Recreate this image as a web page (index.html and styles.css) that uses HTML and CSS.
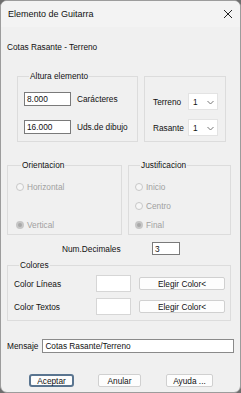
FILE: index.html
```html
<!DOCTYPE html>
<html lang="es">

<head>
  <meta charset="UTF-8" />
  <meta name="viewport" content="width=device-width, initial-scale=1.0" />
  <title>Elemento de Guitarra</title>
  <link rel="stylesheet" href="styles.css">
</head>

<body>
  <div class="window">
    <div class="titlebar">
      <span>Elemento de Guitarra</span>
      <svg class="close" width="10" height="10" viewBox="0 0 10 10">
        <path d="M1 1 L9 9 M9 1 L1 9" stroke="#222" stroke-width="1" fill="none" />
      </svg>
    </div>

    <div class="caption">Cotas Rasante - Terreno</div>

    <div class="row-top">
      <fieldset class="group altura">
        <legend>Altura elemento</legend>
        <div class="field-row">
          <div class="input w-num">8.000</div>
          <span>Carácteres</span>
        </div>
        <div class="field-row second">
          <div class="input w-num">16.000</div>
          <span>Uds.de dibujo</span>
        </div>
      </fieldset>

      <div class="group plain">
        <div class="combo-row">
          <span class="combo-label">Terreno</span>
          <div class="combo">1
            <svg width="7" height="5" viewBox="0 0 7 5">
              <path d="M0.5 1 L3.5 4 L6.5 1" stroke="#777" fill="none" />
            </svg>
          </div>
        </div>
        <div class="combo-row second">
          <span class="combo-label">Rasante</span>
          <div class="combo">1
            <svg width="7" height="5" viewBox="0 0 7 5">
              <path d="M0.5 1 L3.5 4 L6.5 1" stroke="#777" fill="none" />
            </svg>
          </div>
        </div>
      </div>
    </div>

    <div class="row-mid">
      <fieldset class="group orient">
        <legend>Orientacion</legend>
        <div class="radio"><span class="dot"></span>Horizontal</div>
        <div class="radio"></div>
        <div class="radio"><span class="dot checked"></span>Vertical</div>
      </fieldset>
      <fieldset class="group justif">
        <legend>Justificacion</legend>
        <div class="radio"><span class="dot"></span>Inicio</div>
        <div class="radio"><span class="dot"></span>Centro</div>
        <div class="radio"><span class="dot checked"></span>Final</div>
      </fieldset>
    </div>

    <div class="decimals">
      <span class="dec-label">Num.Decimales</span>
      <div class="input w-dec">3</div>
    </div>

    <fieldset class="group colores">
      <legend>Colores</legend>
      <div class="color-row">
        <span class="color-label">Color Líneas</span>
        <div class="swatch"></div>
        <button class="btn pick">Elegir Color&lt;</button>
      </div>
      <div class="color-row second">
        <span class="color-label">Color Textos</span>
        <div class="swatch"></div>
        <button class="btn pick">Elegir Color&lt;</button>
      </div>
    </fieldset>

    <div class="mensaje">
      <span>Mensaje</span>
      <div class="input w-msg">Cotas Rasante/Terreno</div>
    </div>

    <div class="actions">
      <button class="btn default">Aceptar</button>
      <button class="btn anular">Anular</button>
      <button class="btn ayuda">Ayuda ...</button>
    </div>
  </div>
</body>

</html>
```

FILE: styles.css
```css
body {
  margin: 0;
  background-color: #6e6e6e;
}

.window {
  width: 241px;
  height: 393px;
  box-sizing: border-box;
  background-color: #f0f0f0;
  border: 1px solid #9c9c9c;
  border-radius: 7px;
  overflow: hidden;
  font-family: "Liberation Sans", Arial, sans-serif;
  font-size: 8.3px;
  color: #111;
}

.titlebar {
  height: 26px;
  display: flex;
  align-items: center;
  justify-content: space-between;
  padding: 0 7px 0 7px;
  background-color: #f3f3f3;
  font-size: 9px;
}

.caption {
  margin: 14px 0 0 6px;
  line-height: 12px;
}

.group {
  margin: 0;
  padding: 0;
  border: 1px solid #dcdcdc;
  box-sizing: border-box;
}

.group legend {
  margin-left: 5px;
  padding: 0 1px;
  line-height: 10px;
}

.row-top {
  display: flex;
  margin-top: 18px;
  padding-left: 16px;
  gap: 6px;
}

.altura {
  width: 121px;
  padding: 0 0 6px 6px;
}

.field-row {
  display: flex;
  align-items: center;
  gap: 6px;
  margin-top: 11px;
}

.field-row.second {
  margin-top: 14px;
}

.input {
  box-sizing: border-box;
  height: 14px;
  background-color: #fff;
  border: 1px solid #7a7a7a;
  padding: 0 2px;
  display: flex;
  align-items: center;
}

.w-num {
  width: 47px;
}

.plain {
  width: 82px;
  height: 66px;
  margin-top: 5px;
  padding: 16px 0 0 8px;
}

.combo-row {
  display: flex;
  align-items: center;
}

.combo-row.second {
  margin-top: 9px;
}

.combo-label {
  width: 35px;
}

.combo {
  box-sizing: border-box;
  width: 30px;
  height: 17px;
  background-color: #fff;
  border: 1px solid #e3e3e3;
  padding: 1px 3px 0 4px;
  display: flex;
  align-items: center;
  justify-content: space-between;
}

.row-mid {
  display: flex;
  margin-top: 18px;
  padding-left: 6px;
  gap: 6px;
}

.orient {
  width: 115px;
  padding: 7px 0 0 8px;
}

.justif {
  width: 103px;
  padding: 7px 0 0 6px;
}

.radio {
  height: 19px;
  display: flex;
  align-items: center;
  gap: 3px;
  color: #a0a0a0;
}

.dot {
  box-sizing: border-box;
  width: 8px;
  height: 8px;
  border: 1px solid #c8c8c8;
  border-radius: 50%;
  background-color: #f6f6f6;
}

.dot.checked {
  border: 2px solid #c6c6c6;
  background-color: #a8a8a8;
}

.decimals {
  display: flex;
  align-items: center;
  margin-top: 7px;
  padding-left: 61px;
}

.dec-label {
  width: 90px;
}

.w-dec {
  width: 28px;
  height: 13px;
}

.colores {
  width: 224px;
  margin: 5px 0 0 6px;
  padding: 5px 0 5px 6px;
}

.color-row {
  display: flex;
  align-items: center;
}

.color-row.second {
  margin-top: 6px;
}

.color-label {
  width: 82px;
}

.swatch {
  box-sizing: border-box;
  width: 35px;
  height: 17px;
  background-color: #fff;
  border: 1px solid #d6d6d6;
}

.btn {
  box-sizing: border-box;
  height: 13px;
  padding: 0;
  font-family: inherit;
  font-size: 8.3px;
  color: #111;
  background-color: #fdfdfd;
  border: 1px solid #d0d0d0;
  border-radius: 2px;
}

.pick {
  width: 86px;
  margin-left: 8px;
}

.mensaje {
  display: flex;
  align-items: center;
  gap: 4px;
  margin-top: 18px;
  padding-left: 6px;
}

.w-msg {
  width: 192px;
  border-color: #8a8a8a;
}

.actions {
  display: flex;
  margin-top: 21px;
  padding-left: 28px;
}

.default {
  width: 45px;
  border: 2px solid #5a7590;
  border-radius: 3px;
}

.anular {
  width: 43px;
  margin-left: 24px;
}

.ayuda {
  width: 47px;
  margin-left: 25px;
}
```
